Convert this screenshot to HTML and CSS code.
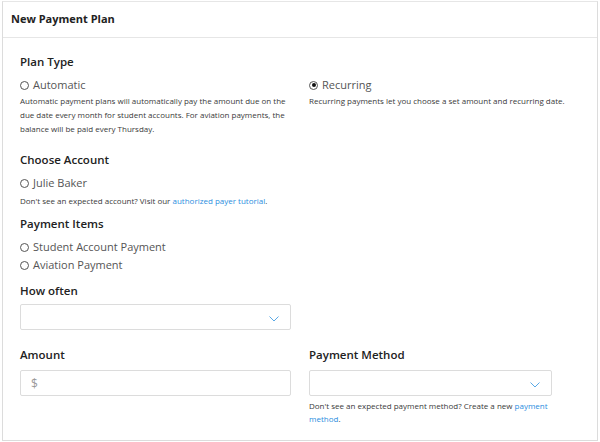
FILE: index.html
```html
<!DOCTYPE html>
<html>
<head>
<meta charset="utf-8">
<link rel="stylesheet" href="styles.css">
</head>
<body>
<div class="card">
  <div class="card-header">New Payment Plan</div>
  <div class="card-body">
    <h3 class="heading first">Plan Type</h3>
    <div class="two-col">
      <div>
        <div class="radio"><span class="dot"></span>Automatic</div>
        <p class="help">Automatic payment plans will automatically pay the amount due on the due date every month for student accounts. For aviation payments, the balance will be paid every Thursday.</p>
      </div>
      <div>
        <div class="radio"><span class="dot checked"></span>Recurring</div>
        <p class="help">Recurring payments let you choose a set amount and recurring date.</p>
      </div>
    </div>

    <h3 class="heading sec">Choose Account</h3>
    <div class="radio"><span class="dot"></span>Julie Baker</div>
    <p class="help note">Don't see an expected account? Visit our <a href="#">authorized payer tutorial</a>.</p>

    <h3 class="heading items">Payment Items</h3>
    <div class="radio"><span class="dot"></span>Student Account Payment</div>
    <div class="radio"><span class="dot"></span>Aviation Payment</div>

    <h3 class="heading often">How often</h3>
    <div class="two-col">
      <div class="select">
        <svg class="chev" viewBox="0 0 10 6" width="10" height="6"><path d="M0.5 0.5 L5 5 L9.5 0.5" fill="none" stroke="#5aa9e6" stroke-width="1"/></svg>
      </div>
    </div>

    <div class="two-col amount-row">
      <div>
        <h3 class="heading">Amount</h3>
        <div class="input"><span class="prefix">$</span></div>
      </div>
      <div>
        <h3 class="heading">Payment Method</h3>
        <div class="select narrow">
          <svg class="chev" viewBox="0 0 10 6" width="10" height="6"><path d="M0.5 0.5 L5 5 L9.5 0.5" fill="none" stroke="#5aa9e6" stroke-width="1"/></svg>
        </div>
        <p class="help note2">Don't see an expected payment method? Create a new <a href="#">payment</a><br><a href="#">method</a>.</p>
      </div>
    </div>
  </div>
</div>
</body>
</html>
```
FILE: styles.css
```css
* { box-sizing: border-box; }
html, body { margin: 0; padding: 0; background: #fff; }
body {
  font-family: "Open Sans", "Noto Sans", sans-serif;
  color: #444;
  width: 600px;
  height: 442px;
  overflow: hidden;
}
.card {
  margin: 1px 2px 0 2px;
  height: 440px;
  border: 1px solid #dcdcdc;
  border-top-color: #e6e6e6;
}
.card-header {
  height: 36px;
  line-height: 34px;
  padding: 0 8px;
  font-size: 11px;
  font-weight: 700;
  color: #222;
  border-bottom: 1px solid #e6e6e6;
}
.card-body {
  padding: 15px 20px 0 17px;
}
.heading {
  margin: 0;
  font-size: 11.5px;
  font-weight: 600;
  color: #222;
  line-height: 18px;
}
.two-col {
  display: grid;
  grid-template-columns: 271px 1fr;
  column-gap: 18px;
}
.radio {
  display: flex;
  align-items: center;
  font-size: 11px;
  line-height: 18px;
  color: #555;
}
.first + .two-col .radio { margin-top: 5px; }
.dot {
  width: 9px;
  height: 9px;
  border: 1px solid #555;
  border-radius: 50%;
  margin-right: 4px;
  position: relative;
  flex: none;
}
.dot.checked::after {
  content: "";
  position: absolute;
  left: 1.5px;
  top: 1.5px;
  width: 4px;
  height: 4px;
  border-radius: 50%;
  background: #111;
}
.help {
  margin: 0;
  font-size: 8px;
  line-height: 14px;
  color: #3a3a3a;
}
.help a { color: #2b8ee0; text-decoration: none; }
.heading.sec { margin-top: 15px; margin-bottom: 5px; }
.note { margin-top: 2px; }
.heading.items { margin-top: 7px; margin-bottom: 5px; }
.heading.often { margin-top: 8px; margin-bottom: 4px; }
.select, .input {
  height: 26px;
  border: 1px solid #dcdcdc;
  border-radius: 2px;
  position: relative;
  display: flex;
  align-items: center;
}
.select .chev {
  position: absolute;
  right: 11px;
  top: 11px;
}
.select.narrow { width: 243px; }
.amount-row { margin-top: 16px; }
.amount-row .heading { margin-bottom: 6px; }
.prefix {
  font-size: 12px;
  color: #999;
  padding-left: 10px;
}
.note2 { margin-top: 3px; line-height: 13px; }
```
